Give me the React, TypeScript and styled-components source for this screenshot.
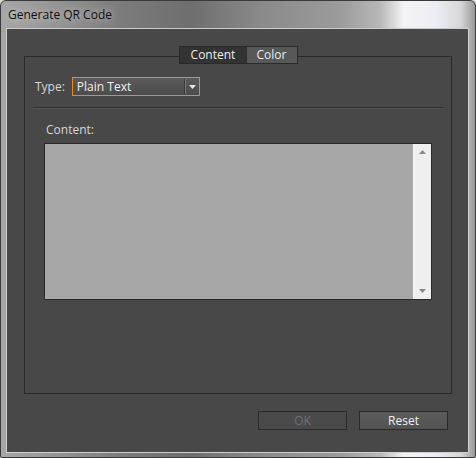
import React from "react";
import styled, { createGlobalStyle } from "styled-components";

const GlobalStyle = createGlobalStyle`
  html, body {
    margin: 0;
    padding: 0;
    background: #d8d8d8;
  }
  body {
    font-family: "Open Sans", "Noto Sans", sans-serif;
  }
`;

const Window = styled.div`
  width: 476px;
  height: 458px;
  box-sizing: border-box;
  display: flex;
  flex-direction: column;
  border-radius: 6px 6px 2px 2px;
  border: 1px solid #3a3a3a;
  background: linear-gradient(
    90deg,
    #a6a6a6 0%,
    #9a9a9a 8%,
    #7c7c7c 25%,
    #6e6e6e 40%,
    #8a8a8a 55%,
    #9c9c9c 72%,
    #b8b8b8 80%,
    #f4f4f6 85%,
    #ececf4 92%,
    #d6d6d6 97%,
    #9a9a9a 100%
  );
  overflow: hidden;
`;

const TitleBar = styled.div`
  height: 28px;
  display: flex;
  align-items: center;
  padding-left: 7px;
  padding-bottom: 1px;
  box-sizing: border-box;
  font-size: 12px;
  color: #101010;
  text-shadow: 0 0 8px rgba(255, 255, 255, 0.7);
`;

const FrameBody = styled.div`
  flex: 1;
  display: flex;
  padding: 0 7px 5px 6px;
`;

const Client = styled.div`
  flex: 1;
  display: flex;
  flex-direction: column;
  background: #484848;
  box-shadow: 0 0 0 1px #cfcfcf;
  padding: 16px 16px 22px 17px;
  color: #dcdcdc;
  font-size: 12px;
`;

const Tabs = styled.div`
  align-self: center;
  display: flex;
  position: relative;
  z-index: 1;
  margin-bottom: -8px;
  margin-top: 1px;
  border: 1px solid #2a2a2a;
  height: 18px;
  box-sizing: border-box;
`;

const Tab = styled.div<{ $active?: boolean }>`
  display: flex;
  align-items: center;
  justify-content: center;
  width: ${(p) => (p.$active ? "67px" : "50px")};
  background: ${(p) => (p.$active ? "#333333" : "#585858")};
  color: #ececec;
  font-size: 12px;
  line-height: 16px;
`;

const GroupBox = styled.div`
  flex: 1;
  display: flex;
  flex-direction: column;
  border: 1px solid #2a2a2a;
  padding-top: 20px;
`;

const TypeRow = styled.div`
  display: flex;
  align-items: center;
  gap: 7px;
  padding-left: 10px;
  height: 19px;
`;

const Label = styled.span`
  color: #d6d6d6;
  font-size: 12px;
`;

const Select = styled.div`
  width: 128px;
  height: 19px;
  box-sizing: border-box;
  border: 1px solid #e38b24;
  background: linear-gradient(#5a5a5a, #4c4c4c);
  display: flex;
  align-items: center;
  color: #f0f0f0;
  font-size: 12px;
`;

const SelectText = styled.span`
  flex: 1;
  padding-left: 4px;
`;

const SelectArrow = styled.div`
  width: 13px;
  height: 15px;
  border-left: 1px solid #777;
  box-shadow: -1px 0 0 #3a3a3a;
  display: flex;
  align-items: center;
  justify-content: center;
`;

const Separator = styled.div`
  height: 1px;
  background: #323232;
  border-bottom: 1px solid #525252;
  margin: 11px 8px 0 8px;
`;

const ContentLabel = styled(Label)`
  display: block;
  margin: 13px 0 6px 21px;
  line-height: 15px;
`;

const TextBox = styled.div`
  margin: 0 19px;
  height: 157px;
  box-sizing: border-box;
  border: 1px solid #2a2a2a;
  background: #a7a7a7;
  display: flex;
  justify-content: flex-end;
`;

const Scrollbar = styled.div`
  width: 17px;
  background: #efefef;
  border-left: 1px solid #f8f8f8;
  display: flex;
  flex-direction: column;
  justify-content: space-between;
  align-items: center;
  padding: 6px 0;
`;

const ButtonRow = styled.div`
  display: flex;
  justify-content: flex-end;
  gap: 12px;
  margin-top: 17px;
  padding-right: 4px;
`;

const Button = styled.div<{ $disabled?: boolean }>`
  width: 89px;
  height: 19px;
  box-sizing: border-box;
  display: flex;
  align-items: center;
  justify-content: center;
  border: 1px solid #2a2a2a;
  background: ${(p) =>
    p.$disabled ? "#4a4a4a" : "linear-gradient(#5c5c5c, #525252)"};
  color: ${(p) => (p.$disabled ? "#6f6f6f" : "#f0f0f0")};
  font-size: 12px;
`;

const Triangle = ({ up, color }: { up?: boolean; color: string }) => (
  <svg width="7" height="4" viewBox="0 0 7 4">
    <polygon points={up ? "3.5,0 7,4 0,4" : "0,0 7,0 3.5,4"} fill={color} />
  </svg>
);

export default function App() {
  return (
    <>
      <GlobalStyle />
      <Window>
        <TitleBar>Generate QR Code</TitleBar>
        <FrameBody>
          <Client>
            <Tabs>
              <Tab $active>Content</Tab>
              <Tab>Color</Tab>
            </Tabs>
            <GroupBox>
              <TypeRow>
                <Label>Type:</Label>
                <Select>
                  <SelectText>Plain Text</SelectText>
                  <SelectArrow>
                    <Triangle color="#e8e8e8" />
                  </SelectArrow>
                </Select>
              </TypeRow>
              <Separator />
              <ContentLabel>Content:</ContentLabel>
              <TextBox>
                <Scrollbar>
                  <Triangle up color="#8a8a8a" />
                  <Triangle color="#8a8a8a" />
                </Scrollbar>
              </TextBox>
            </GroupBox>
            <ButtonRow>
              <Button $disabled>OK</Button>
              <Button>Reset</Button>
            </ButtonRow>
          </Client>
        </FrameBody>
      </Window>
    </>
  );
}
